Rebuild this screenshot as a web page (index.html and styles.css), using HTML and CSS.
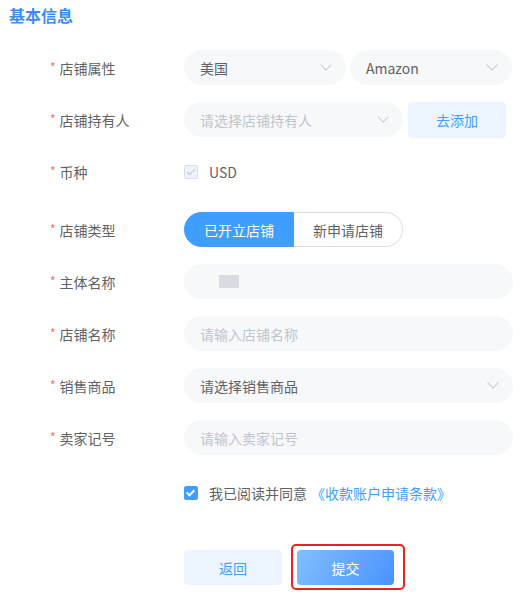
FILE: index.html
```html
<!DOCTYPE html>
<html lang="zh-CN">
    <head>
        <meta charset="utf-8">
        <title>基本信息</title>
        <link rel="stylesheet" href="styles.css">
    </head>

    <body>
        <div id="page">
            <h2 class="section-title">基本信息</h2>

            <div class="form">
                <div class="form-row">
                    <label class="form-label required">店铺属性</label>
                    <div class="form-field split">
                        <div class="select"><span class="value">美国</span><span class="arrow"></span></div>
                        <div class="select"><span class="value">Amazon</span><span class="arrow"></span></div>
                    </div>
                </div>

                <div class="form-row">
                    <label class="form-label required">店铺持有人</label>
                    <div class="form-field">
                        <div class="select owner"><span class="value placeholder">请选择店铺持有人</span><span class="arrow"></span></div>
                        <button class="btn btn-light add">去添加</button>
                    </div>
                </div>

                <div class="form-row small">
                    <label class="form-label required">币种</label>
                    <div class="form-field">
                        <label class="checkbox disabled"><span class="box"></span>USD</label>
                    </div>
                </div>

                <div class="form-row">
                    <label class="form-label required">店铺类型</label>
                    <div class="form-field">
                        <div class="segmented">
                            <span class="segment active">已开立店铺</span
                            ><span class="segment">新申请店铺</span>
                        </div>
                    </div>
                </div>

                <div class="form-row">
                    <label class="form-label required">主体名称</label>
                    <div class="form-field">
                        <div class="input"><span class="masked"></span></div>
                    </div>
                </div>

                <div class="form-row">
                    <label class="form-label required">店铺名称</label>
                    <div class="form-field">
                        <div class="input"><span class="placeholder">请输入店铺名称</span></div>
                    </div>
                </div>

                <div class="form-row">
                    <label class="form-label required">销售商品</label>
                    <div class="form-field">
                        <div class="select wide"><span class="value">请选择销售商品</span><span class="arrow"></span></div>
                    </div>
                </div>

                <div class="form-row">
                    <label class="form-label required">卖家记号</label>
                    <div class="form-field">
                        <div class="input"><span class="placeholder">请输入卖家记号</span></div>
                    </div>
                </div>

                <div class="form-row agree">
                    <div class="form-label"></div>
                    <div class="form-field">
                        <label class="checkbox checked"><span class="box"></span>我已阅读并同意</label>
                        <a class="terms" href="#">《收款账户申请条款》</a>
                    </div>
                </div>

                <div class="form-row actions">
                    <div class="form-label"></div>
                    <div class="form-field">
                        <button class="btn btn-light back">返回</button>
                        <div class="highlight">
                            <button class="btn btn-primary">提交</button>
                        </div>
                    </div>
                </div>
            </div>
        </div>
    </body>
</html>
```

FILE: styles.css
```css
body {
    margin: 0;
    background: #fff;
    font-family: "Noto Sans CJK SC", "Liberation Sans", sans-serif;
    color: #606266;
    font-size: 14px;
}

#page {
    width: 519px;
    height: 597px;
    overflow: hidden;
    padding: 3px 6px 0 9px;
    box-sizing: border-box;
}

.section-title {
    margin: 0;
    font-size: 16px;
    line-height: 24px;
    font-weight: 600;
    color: #3d8cf0;
}

.form {
    margin-top: 23px;
}

.form-row {
    display: flex;
    align-items: center;
    height: 35px;
    margin-bottom: 17px;
}

.form-row.small {
    margin-bottom: 23px;
}

.form-label {
    width: 175px;
    flex: none;
    padding-left: 41px;
    box-sizing: border-box;
    font-size: 14px;
    color: #606266;
}

.form-label.required::before {
    content: "*";
    color: #f56c6c;
    margin-right: 4px;
    font-size: 12px;
    vertical-align: 2px;
}

.form-field {
    flex: 1;
    display: flex;
    align-items: center;
}

.split {
    gap: 4px;
}

.select,
.input {
    height: 35px;
    border-radius: 18px;
    background: #f7f8fa;
    display: flex;
    align-items: center;
    padding: 0 12px 0 16px;
    box-sizing: border-box;
}

.select {
    width: 162px;
    justify-content: space-between;
}

.select.owner {
    width: 219px;
    margin-right: 5px;
}

.select.wide,
.input {
    width: 329px;
}

.value {
    color: #606266;
}

.placeholder {
    color: #c0c4cc;
}

.arrow {
    width: 7px;
    height: 7px;
    border-right: 1px solid #c8ccd3;
    border-bottom: 1px solid #c8ccd3;
    transform: rotate(45deg);
    margin: -5px 4px 0 0;
}

.masked {
    width: 20px;
    height: 13px;
    background: #d8dce2;
    margin-left: 19px;
}

.btn {
    font-family: inherit;
    font-size: 14px;
    height: 35px;
    width: 98px;
    border: none;
    border-radius: 4px;
    cursor: pointer;
}

.btn-light {
    background: #ecf5ff;
    color: #409eff;
}

.btn.add {
    height: 36px;
}

.btn-primary {
    width: 97px;
    background: linear-gradient(120deg, #80bfff, #4a93ff);
    color: #fff;
    display: block;
}

.checkbox {
    display: flex;
    align-items: center;
    color: #606266;
}

.checkbox .box {
    width: 12px;
    height: 12px;
    border: 1px solid #dcdfe6;
    border-radius: 2px;
    background: #edf2fc;
    margin-right: 11px;
    position: relative;
}

.checkbox .box::after {
    content: "";
    position: absolute;
    left: 4px;
    top: 1px;
    width: 3px;
    height: 7px;
    border-right: 1px solid #c0c4cc;
    border-bottom: 1px solid #c0c4cc;
    transform: rotate(45deg);
}

.checkbox.checked .box {
    background: #409eff;
    border-color: #409eff;
}

.checkbox.checked .box::after {
    border-color: #fff;
    border-width: 0 2px 2px 0;
    left: 3px;
    width: 3px;
    height: 6px;
}

.terms {
    color: #409eff;
    text-decoration: none;
    margin-left: 4px;
}

.form-row.agree {
    margin-top: 20px;
    margin-bottom: 34px;
}

.form-row.actions {
    height: auto;
    align-items: flex-start;
}

.segmented {
    display: flex;
    height: 35px;
}

.segment {
    width: 110px;
    display: flex;
    align-items: center;
    justify-content: center;
    box-sizing: border-box;
    border: 1px solid #dcdfe6;
    color: #606266;
}

.segment.active {
    background: #409eff;
    border-color: #409eff;
    color: #fff;
    border-radius: 18px 0 0 18px;
}

.segment:last-child {
    width: 109px;
    border-left: none;
    border-radius: 0 18px 18px 0;
}

.actions .form-field {
    align-items: flex-start;
    gap: 9px;
}

.btn.back {
    margin-top: 6px;
}

.highlight {
    border: 2px solid #e8231f;
    border-radius: 5px;
    padding: 4px 9px 3px 4px;
}
```
